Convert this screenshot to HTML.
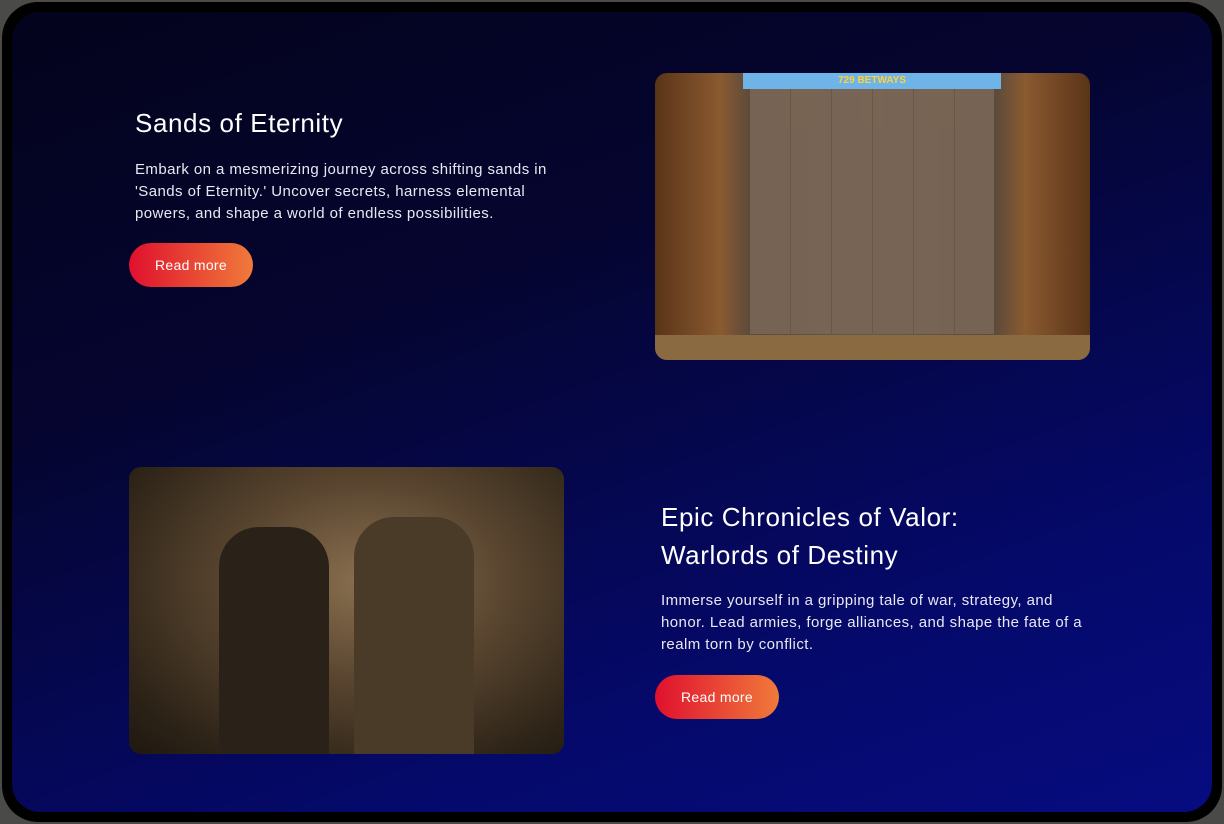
<!DOCTYPE html>
<html><head><meta charset="utf-8"><style>
*{margin:0;padding:0;box-sizing:border-box}
body{width:1224px;height:824px;background:#4a4b48;overflow:hidden;font-family:"Liberation Sans",sans-serif}
.frame{position:absolute;left:2px;top:2px;width:1220px;height:820px;border-radius:36px;background:#000}
.inner{position:absolute;left:12px;top:12px;width:1200px;height:800px;border-radius:28px;overflow:hidden;
background:linear-gradient(160deg,#04031c 0%,#050530 35%,#05096a 75%,#060c80 100%)}
h2{position:absolute;color:#fff;font-weight:400;font-size:26px;line-height:38px;letter-spacing:0.6px}
p{position:absolute;color:#e8e8f2;font-size:15px;line-height:22px;letter-spacing:0.43px}
.btn{position:absolute;width:124px;height:44px;border-radius:22px;background:linear-gradient(90deg,#e0102e,#f07a3a);color:#fff;font-size:14px;text-align:center;line-height:44px;letter-spacing:0.3px}
.img{position:absolute;border-radius:12px;overflow:hidden}
</style></head><body>
<div class="frame"></div>
<div class="inner">
<h2 style="left:123px;top:92px">Sands of Eternity</h2>
<p style="left:123px;top:147px;width:425px">Embark on a mesmerizing journey across shifting sands in 'Sands of Eternity.' Uncover secrets, harness elemental powers, and shape a world of endless possibilities.</p>
<div class="btn" style="left:117px;top:231px">Read more</div>
<div class="img" style="left:643px;top:61px;width:435px;height:287px;background:linear-gradient(90deg,#5a3418 0%,#8a5a30 15%,#5b4a3c 22%,#6a5a4c 50%,#5b4a3c 78%,#8a5a30 85%,#5a3418 100%)">
 <div style="position:absolute;left:88px;top:0;width:258px;height:16px;background:#6fb4e8;color:#ffd23a;font-size:10px;text-align:center;font-weight:bold;line-height:16px">729 BETWAYS</div>
 <div style="position:absolute;left:95px;top:16px;width:244px;height:245px;background:repeating-linear-gradient(90deg,#7a6656 0 40px,#6b584a 40px 41px),#7a6656;opacity:.9"></div>
 <div style="position:absolute;left:0;top:262px;width:435px;height:25px;background:#8a6a40"></div>
</div>
<div class="img" style="left:117px;top:455px;width:435px;height:287px;background:radial-gradient(ellipse at 55% 40%,#8a7050 0%,#5a4630 40%,#2e2418 80%,#1e1810 100%)">
 <div style="position:absolute;left:90px;top:60px;width:110px;height:227px;border-radius:40px 40px 0 0;background:#2a2218"></div>
 <div style="position:absolute;left:225px;top:50px;width:120px;height:237px;border-radius:40px 40px 0 0;background:#4a3a28"></div>
</div>
<h2 style="left:649px;top:486px;width:330px">Epic Chronicles of Valor: Warlords of Destiny</h2>
<p style="left:649px;top:578px;width:425px">Immerse yourself in a gripping tale of war, strategy, and honor. Lead armies, forge alliances, and shape the fate of a realm torn by conflict.</p>
<div class="btn" style="left:643px;top:663px">Read more</div>
</div>
</body></html>
